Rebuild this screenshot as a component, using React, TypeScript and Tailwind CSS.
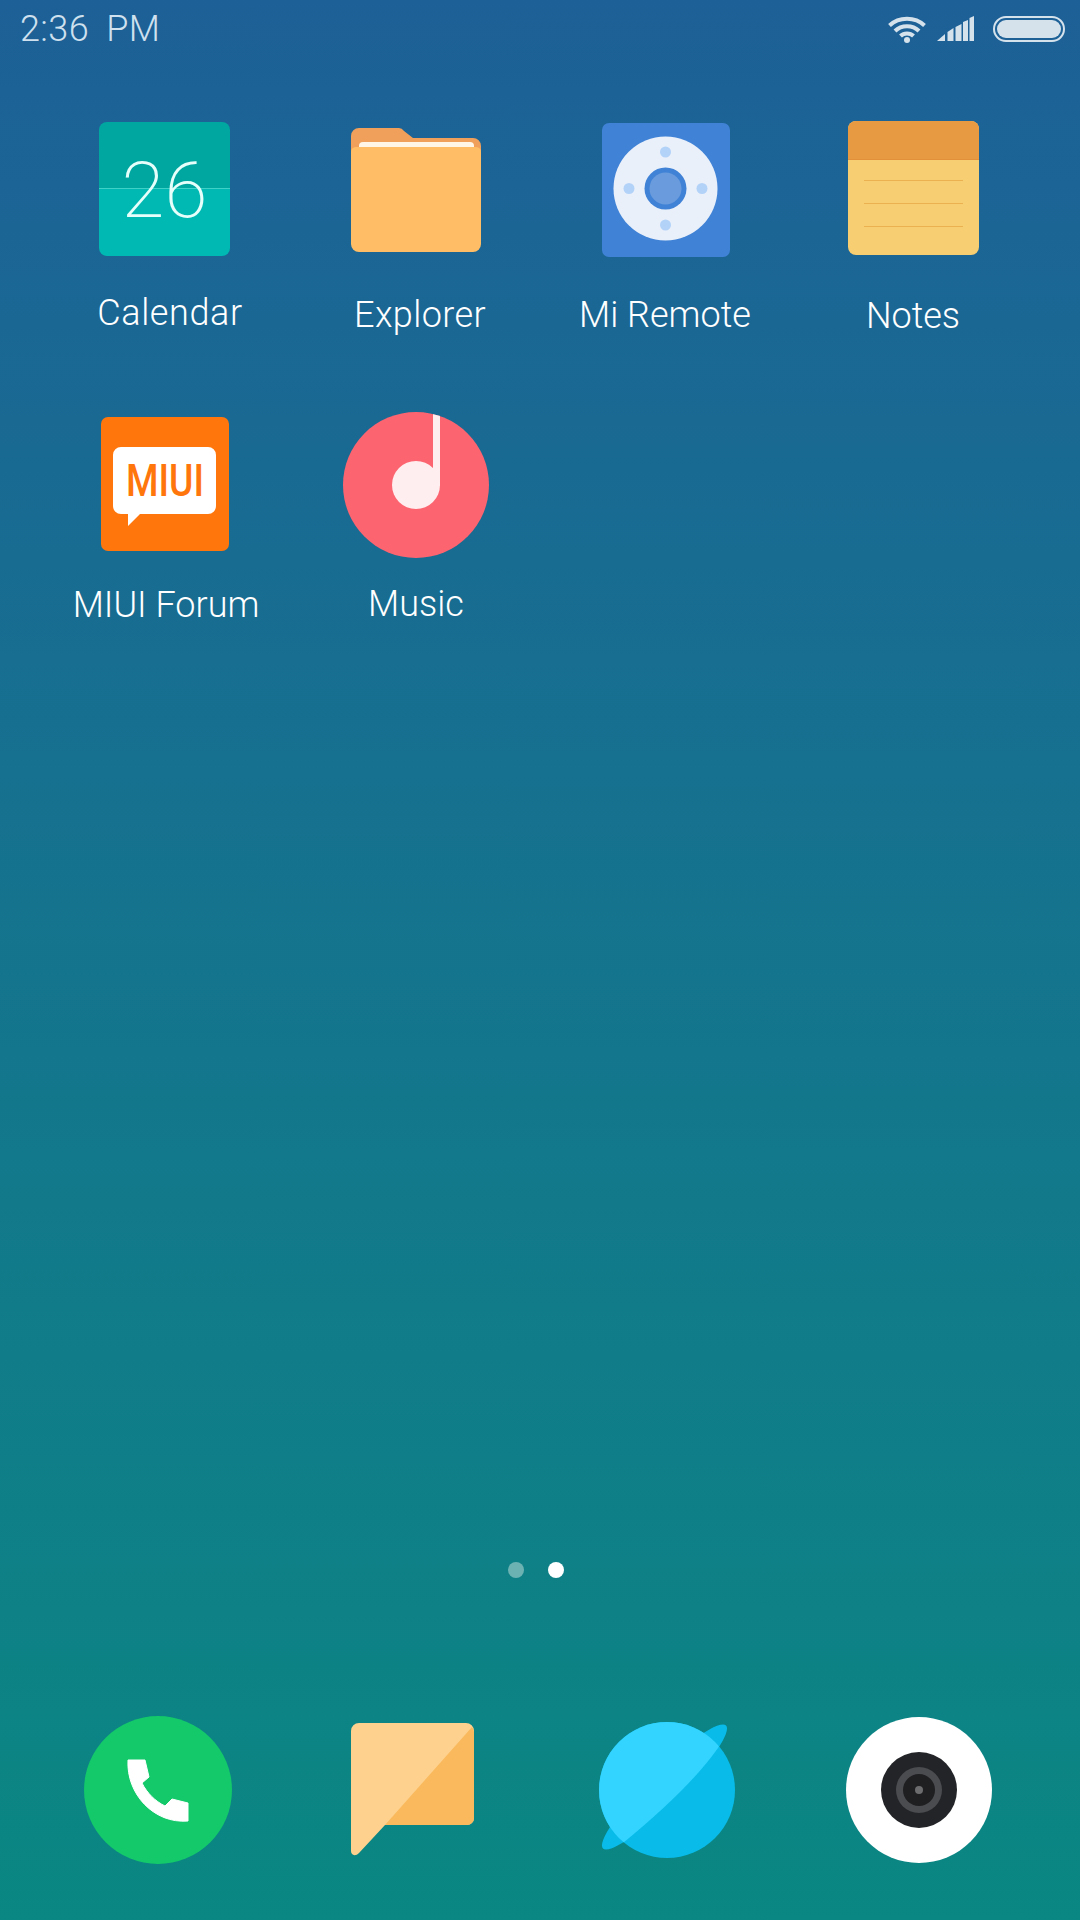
function CalendarIcon() {
  return (
    <div className="relative w-[131px] h-[134px] rounded-[8px] overflow-hidden flex flex-col">
      <div className="h-[67px] bg-[#00a7a0] border-b border-[#3fd0c8]" />
      <div className="flex-1 bg-[#00b9b3]" />
      <div className="absolute inset-0 pt-[3px] flex items-center justify-center text-[78px] font-extralight text-[#e6fffb] font-[Roboto,sans-serif] leading-none">
        26
      </div>
    </div>
  );
}

function FolderIcon() {
  return (
    <svg width="130" height="124" viewBox="0 0 130 124">
      <path d="M0 8a8 8 0 0 1 8-8h40q3 0 5 3l9 7h60a8 8 0 0 1 8 8v30H0z" fill="#f0a05a" />
      <path d="M8 18a4 4 0 0 1 4-4h107a4 4 0 0 1 4 4v8H8z" fill="#fff6e8" />
      <path d="M0 24q0-5 6-5h118q6 0 6 5v92a8 8 0 0 1-8 8H8a8 8 0 0 1-8-8z" fill="#ffbe66" />
    </svg>
  );
}

function RemoteIcon() {
  return (
    <svg width="128" height="134" viewBox="0 0 128 134">
      <rect width="128" height="134" rx="7" fill="#3f82d6" />
      <circle cx="63.500" cy="65.500" r="52" fill="#eaf0fa" />
      <circle cx="63.500" cy="29" r="5.500" fill="#b3d2f8" />
      <circle cx="63.500" cy="102" r="5.500" fill="#b3d2f8" />
      <circle cx="27" cy="65.500" r="5.500" fill="#b3d2f8" />
      <circle cx="100" cy="65.500" r="5.500" fill="#b3d2f8" />
      <circle cx="63.500" cy="65.500" r="21" fill="#3f82d6" />
      <circle cx="63.500" cy="65.500" r="16" fill="#6a9bdc" />
    </svg>
  );
}

function NotesIcon() {
  return (
    <div className="w-[131px] h-[134px] rounded-[8px] overflow-hidden flex flex-col bg-[#f8ce72]">
      <div className="h-[39px] bg-[#e89a43] border-b border-[#e2913a]" />
      <div className="flex flex-col gap-[22px] px-[16px] pt-[20px]">
        <div className="h-px bg-[#ebb050]" />
        <div className="h-px bg-[#ebb050]" />
        <div className="h-px bg-[#ebb050]" />
      </div>
    </div>
  );
}

function ForumIcon() {
  return (
    <svg width="128" height="134" viewBox="0 0 128 134">
      <rect width="128" height="134" rx="7" fill="#ff760d" />
      <path d="M20 30h87a8 8 0 0 1 8 8v51a8 8 0 0 1-8 8H39l-12 12V97h-7a8 8 0 0 1-8-8V38a8 8 0 0 1 8-8z" fill="#fff" />
      <text x="25" y="79" textLength="78" lengthAdjust="spacingAndGlyphs" fontFamily="Roboto, sans-serif" fontWeight="500" fontSize="44" fill="#ff760d">
        MIUI
      </text>
    </svg>
  );
}

function MusicIcon() {
  return (
    <svg width="146" height="146" viewBox="0 0 146 146">
      <defs>
        <clipPath id="musicClip">
          <circle cx="73" cy="73" r="73" />
        </clipPath>
      </defs>
      <circle cx="73" cy="73" r="73" fill="#fc6470" />
      <g clipPath="url(#musicClip)" fill="#ffeeef">
        <rect x="90" y="2" width="7" height="72" />
        <circle cx="73" cy="73" r="24" />
      </g>
    </svg>
  );
}

function PhoneIcon() {
  return (
    <svg width="148" height="148" viewBox="0 0 148 148">
      <circle cx="74" cy="74" r="74" fill="#13c96a" />
      <path d="M44 44h17l4 17-7 6c5 10 13 18 23 23l7-7 16 4v18c-34 3-62-27-60-61z" fill="#fff" stroke="#fff" strokeWidth="1" strokeLinejoin="round" />
    </svg>
  );
}

function MessageIcon() {
  return (
    <svg width="123" height="134" viewBox="0 0 123 134">
      <path d="M8 0h107a8 8 0 0 1 8 8v87a7 7 0 0 1-7 7H34L8 130c-4 4-8 2-8-2V8a8 8 0 0 1 8-8z" fill="#fed28e" />
      <path d="M121 4a8 8 0 0 1 2 5v86a7 7 0 0 1-7 7H34z" fill="#fab95c" />
    </svg>
  );
}

function BrowserIcon() {
  return (
    <svg width="136" height="136" viewBox="0 0 136 136" className="overflow-visible">
      <defs>
        <clipPath id="globeClip">
          <circle cx="68" cy="68" r="68" />
        </clipPath>
      </defs>
      <ellipse cx="65.500" cy="65" rx="87" ry="16" transform="rotate(-45 65.500 65)" fill="#08bbe9" />
      <circle cx="68" cy="68" r="68" fill="#08bbe9" />
      <path d="M119 26Q91 66 24 121L-10 130V-10H140Z" fill="#33d4ff" clipPath="url(#globeClip)" />
    </svg>
  );
}

function CameraIcon() {
  return (
    <svg width="146" height="146" viewBox="0 0 146 146">
      <circle cx="73" cy="73" r="73" fill="#fff" />
      <circle cx="73" cy="73" r="38" fill="#232427" />
      <circle cx="73" cy="73" r="23" fill="#4b4c50" />
      <circle cx="73" cy="73" r="16" fill="#1f1f21" />
      <circle cx="73" cy="73" r="4" fill="#6c6c6e" />
    </svg>
  );
}

function StatusIcons() {
  return (
    <div className="flex items-start pt-[16px] pr-[15px]">
      <svg width="38" height="27" viewBox="0 0 38 27" fill="none" stroke="#d5e2ec" strokeWidth="4">
        <path d="M1.500 9.500C11 0.500 27 0.500 36.500 9.500" />
        <path d="M7 15C13.500 8.500 24.500 8.500 31 15" />
        <path d="M12.500 20C16 16.500 22 16.500 25.500 20" />
        <circle cx="19" cy="24" r="3" fill="#d5e2ec" stroke="none" />
      </svg>
      <svg width="37" height="25" viewBox="0 0 37 25" fill="#d5e2ec" className="ml-[11px]">
        <path d="M0 25l8-7v7z" />
        <path d="M10.500 16l6-4v13h-6z" />
        <path d="M18.500 11l6-3v17h-6z" />
        <path d="M26 6l5-2v21h-5z" />
        <path d="M32.500 2l4.500-2v25h-4.500z" />
      </svg>
      <div className="ml-[19px] w-[72px] h-[26px] rounded-full border-2 border-[#d5e2ec] p-[2px]">
        <div className="w-full h-full rounded-full bg-[#d5e2ec]" />
      </div>
    </div>
  );
}

function AppLabel({ children, className }: { children: string; className: string }) {
  return (
    <div className={`text-[36px] font-light leading-[44px] text-white text-center font-[Roboto,sans-serif] whitespace-nowrap ${className}`}>
      {children}
    </div>
  );
}

export default function App() {
  return (
    <div className="w-[1080px] h-[1920px] flex flex-col bg-gradient-to-b from-[#1d6097] to-[#0a8782] overflow-hidden">
      <div className="h-[60px] flex justify-between">
        <div className="pl-[20px] pt-[9px] text-[36px] leading-[41px] font-light tracking-[0.4px] text-[#cfe0ee] font-[Roboto,sans-serif] [word-spacing:8px]">
          2:36 PM
        </div>
        <StatusIcons />
      </div>

      <div className="h-[340px] flex pl-[50px]">
        <div className="w-[240px] flex flex-col">
          <div className="ml-[49px] mt-[62px]"><CalendarIcon /></div>
          <AppLabel className="mt-[35px] tracking-[0.6px]">Calendar</AppLabel>
        </div>
        <div className="ml-[10px] w-[240px] flex flex-col">
          <div className="ml-[51px] mt-[68px]"><FolderIcon /></div>
          <AppLabel className="mt-[41px] tracking-[0.4px]">Explorer</AppLabel>
        </div>
        <div className="ml-[5px] w-[240px] flex flex-col">
          <div className="ml-[57px] mt-[63px]"><RemoteIcon /></div>
          <AppLabel className="mt-[36px]">Mi Remote</AppLabel>
        </div>
        <div className="ml-[8px] w-[240px] flex flex-col">
          <div className="ml-[55px] mt-[61px]"><NotesIcon /></div>
          <AppLabel className="mt-[39px]">Notes</AppLabel>
        </div>
      </div>

      <div className="flex pl-[46px]">
        <div className="w-[240px] flex flex-col">
          <div className="ml-[55px] mt-[17px]"><ForumIcon /></div>
          <AppLabel className="mt-[32px]">MIUI Forum</AppLabel>
        </div>
        <div className="ml-[10px] w-[240px] flex flex-col">
          <div className="ml-[47px] mt-[12px]"><MusicIcon /></div>
          <AppLabel className="mt-[24px]">Music</AppLabel>
        </div>
      </div>

      <div className="mt-auto pr-[8px] flex justify-center gap-[24px]">
        <div className="w-[16px] h-[16px] rounded-full bg-[#6cb2b3]" />
        <div className="w-[16px] h-[16px] rounded-full bg-white" />
      </div>

      <div className="h-[342px] flex items-start pl-[84px]">
        <div className="mt-[138px]"><PhoneIcon /></div>
        <div className="ml-[119px] mt-[145px]"><MessageIcon /></div>
        <div className="ml-[125px] mt-[144px]"><BrowserIcon /></div>
        <div className="ml-[111px] mt-[139px]"><CameraIcon /></div>
      </div>
    </div>
  );
}
